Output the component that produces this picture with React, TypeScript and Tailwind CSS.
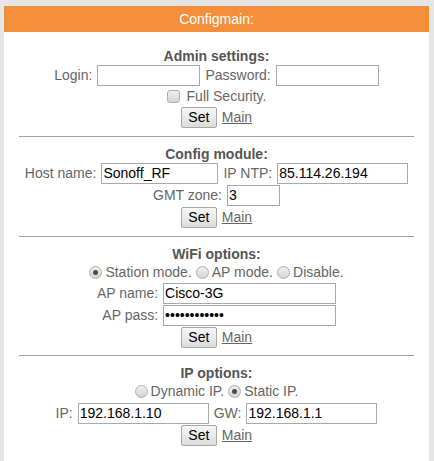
import React from "react";

function Input({ w, value, type = "text" }: { w: string; value?: string; type?: string }) {
  return (
    <input
      type={type}
      readOnly
      value={value ?? ""}
      className={`${w} h-[21px] border border-[#a9a9a9] bg-white px-[1px] text-[14px] text-black outline-none font-['Liberation_Sans',Arial,sans-serif]`}
    />
  );
}

function Radio({ checked }: { checked?: boolean }) {
  return (
    <span className="flex h-[13px] w-[13px] items-center justify-center rounded-full border border-[#b0b0b0] bg-gradient-to-b from-[#f0f0f0] to-[#d4d4d4]">
      {checked ? <span className="h-[5px] w-[5px] rounded-full bg-[#4a4a4a]" /> : null}
    </span>
  );
}

function SetRow() {
  return (
    <div className="flex h-[22px] items-center justify-center gap-[5px]">
      <button className="h-[21px] w-[36px] rounded-[2px] border border-[#a8a8a8] bg-gradient-to-b from-[#f7f7f7] to-[#dcdcdc] text-[14px] leading-none text-black">
        Set
      </button>
      <a className="text-[14px] text-[#666] underline">Main</a>
    </div>
  );
}

function Title({ children }: { children: React.ReactNode }) {
  return <div className="flex h-[16px] items-center justify-center text-[14px] font-bold text-[#555]">{children}</div>;
}

function Row({ children }: { children: React.ReactNode }) {
  return <div className="flex h-[22px] items-center justify-center gap-[5px] text-[14px] text-[#666]">{children}</div>;
}

function Hr() {
  return <div className="mx-[15px] h-px bg-[#a0a0a0]" />;
}

export default function App() {
  return (
    <div className="min-h-[461px] w-[434px] bg-[#e6e6e6] pt-[6px] pl-[4px] pr-[5px] font-['Liberation_Sans',Arial,sans-serif]">
      <div className="min-h-[455px] bg-white">
        <div className="flex h-[26px] items-center justify-center bg-[#f38f3a] text-[14px] text-white">Configmain:</div>

        <div className="pt-[16px] pb-[8px]">
          <Title>Admin settings:</Title>
          <Row>
            <span>Login:</span>
            <Input w="w-[103px]" />
            <span>Password:</span>
            <Input w="w-[103px]" />
          </Row>
          <div className="flex h-[20px] items-center justify-center gap-[7px] text-[14px] text-[#666]">
            <span className="h-[13px] w-[13px] rounded-[3px] border border-[#b0b0b0] bg-gradient-to-b from-[#f0f0f0] to-[#d4d4d4]" />
            <span>Full Security.</span>
          </div>
          <SetRow />
        </div>
        <Hr />

        <div className="pt-[9px] pb-[8px]">
          <Title>Config module:</Title>
          <Row>
            <span>Host name:</span>
            <Input w="w-[117px]" value="Sonoff_RF" />
            <span>IP NTP:</span>
            <Input w="w-[131px]" value="85.114.26.194" />
          </Row>
          <Row>
            <span>GMT zone:</span>
            <Input w="w-[53px]" value="3" />
          </Row>
          <SetRow />
        </div>
        <Hr />

        <div className="pt-[9px] pb-[7px]">
          <Title>WiFi options:</Title>
          <div className="flex h-[21px] items-center justify-center text-[14px] text-[#666]">
            <Radio checked />
            <span className="ml-[3px]">Station mode.</span>
            <span className="ml-[4px]"><Radio /></span>
            <span className="ml-[3px]">AP mode.</span>
            <span className="ml-[4px]"><Radio /></span>
            <span className="ml-[3px]">Disable.</span>
          </div>
          <div className="flex flex-col items-center">
            <div className="grid grid-cols-[auto_auto] items-center gap-x-[5px] gap-y-[1px] text-[14px] text-[#666]">
              <span className="text-right">AP name:</span>
              <Input w="w-[173px]" value="Cisco-3G" />
              <span className="text-right">AP pass:</span>
              <Input w="w-[173px]" type="password" value="123456789012" />
            </div>
          </div>
          <SetRow />
        </div>
        <Hr />

        <div className="pt-[9px] pb-[8px]">
          <Title>IP options:</Title>
          <div className="flex h-[21px] items-center justify-center text-[14px] text-[#666]">
            <Radio />
            <span className="ml-[3px]">Dynamic IP.</span>
            <span className="ml-[4px]"><Radio checked /></span>
            <span className="ml-[3px]">Static IP.</span>
          </div>
          <Row>
            <span>IP:</span>
            <Input w="w-[131px]" value="192.168.1.10" />
            <span>GW:</span>
            <Input w="w-[131px]" value="192.168.1.1" />
          </Row>
          <SetRow />
        </div>
      </div>
    </div>
  );
}
